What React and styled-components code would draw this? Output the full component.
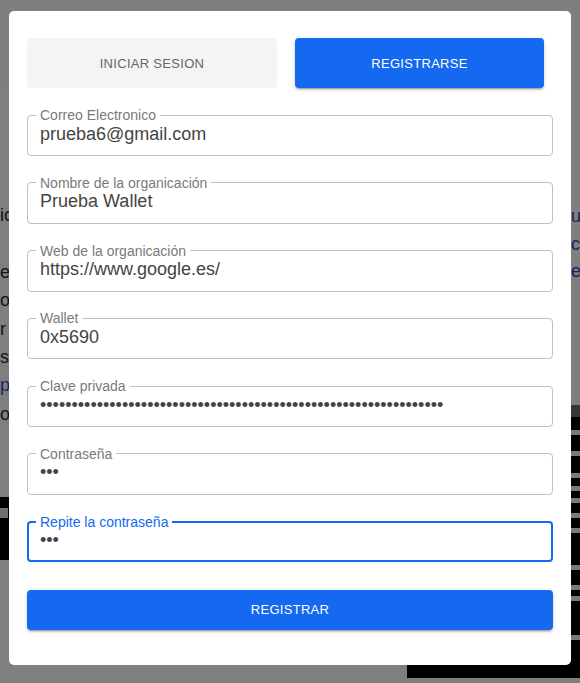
import React from 'react';
import styled, { createGlobalStyle } from 'styled-components';

const GlobalStyle = createGlobalStyle`
    html, body {
        margin: 0;
        padding: 0;
        height: 100%;
        overflow: hidden;
        font-family: "Liberation Sans", Arial, sans-serif;
        background: #ffffff;
    }
    * {
        box-sizing: border-box;
    }
`;

const BLUE = '#1469f0';

const fields = [
    { label: 'Correo Electronico', value: 'prueba6@gmail.com', type: 'text' },
    { label: 'Nombre de la organicación', value: 'Prueba Wallet', type: 'text' },
    { label: 'Web de la organicación', value: 'https://www.google.es/', type: 'text' },
    { label: 'Wallet', value: '0x5690', type: 'text' },
    { label: 'Clave privada', value: 'a3f9c1d27b8e4f60a1c5d9e3b7f2a6c0d4e8f1a5b9c3d7e2f6a0b4c8d1e5f9a3', type: 'password' },
    { label: 'Contraseña', value: '123', type: 'password' },
    { label: 'Repite la contraseña', value: '123', type: 'password', focused: true },
];

const leftLines = [
    { text: 'icación de la plataforma', blue: false },
    { text: '  ', blue: false },
    { text: 'e la cadena de bloques', blue: false },
    { text: 'organizaciones registradas', blue: false },
    { text: 'r validar los documentos', blue: false },
    { text: 'su propia wallet', blue: false },
    { text: 'para más información', blue: true },
    { text: 'o: contacto', blue: false },
];

const rightLinks = ['uestro proyecto', 'cumentación', 'er más'];

const darkRows = [37, 58, 80, 93, 105, 120, 135, 172, 192, 203, 242];

const App = () => {
    return (
        <>
            <GlobalStyle />
            <Page>
                <PageHeader />
                <PageMain>
                    <LeftColumn>
                        <Paragraph>
                            {leftLines.map((line, i) => (
                                <Line key={i} $blue={line.blue}>{line.text}</Line>
                            ))}
                        </Paragraph>
                        <ImageBlock>
                            <ImageNotch />
                        </ImageBlock>
                    </LeftColumn>
                    <RightColumn>
                        <Links>
                            {rightLinks.map((l) => (
                                <LinkLine key={l}>{l}</LinkLine>
                            ))}
                        </Links>
                        <DarkPanel>
                            <DarkPanelTop />
                            {darkRows.map((top, i) => (
                                <DarkStripe key={i} style={{ top: top - 12 }} />
                            ))}
                        </DarkPanel>
                    </RightColumn>
                </PageMain>
            </Page>

            <Overlay>
                <Modal>
                    <Tabs>
                        <TabButton>INICIAR SESION</TabButton>
                        <TabButton $active>REGISTRARSE</TabButton>
                    </Tabs>
                    <Form onSubmit={(e) => e.preventDefault()}>
                        {fields.map((f) => (
                            <Field key={f.label} $focused={f.focused}>
                                <Legend $focused={f.focused}>{f.label}</Legend>
                                <Input type={f.type} defaultValue={f.value} readOnly $focused={f.focused} />
                            </Field>
                        ))}
                        <SubmitButton type="submit">REGISTRAR</SubmitButton>
                    </Form>
                </Modal>
            </Overlay>
        </>
    );
};

export default App;

const Page = styled.div`
    width: 100%;
    height: 100vh;
    display: flex;
    flex-direction: column;
    background: #ffffff;
`;

const PageHeader = styled.div`
    height: 88px;
    flex-shrink: 0;
    background: #fdfdfd;
`;

const PageMain = styled.div`
    display: grid;
    grid-template-columns: 407px 1fr;
    align-items: start;
`;

const LeftColumn = styled.div`
    display: flex;
    flex-direction: column;
`;

const Paragraph = styled.div`
    margin-top: 113px;
    display: flex;
    flex-direction: column;
`;

const Line = styled.div`
    font-size: 18px;
    line-height: 28.4px;
    height: 28.4px;
    white-space: pre;
    color: ${(p) => (p.$blue ? '#1d4fb8' : '#2a2a2a')};
`;

const ImageBlock = styled.div`
    margin-top: 69px;
    height: 63px;
    width: 300px;
    background: #000;
    position: relative;
`;

const ImageNotch = styled.div`
    position: absolute;
    left: 0;
    top: 11px;
    width: 8px;
    height: 10px;
    background: #e0e0e0;
`;

const RightColumn = styled.div`
    display: flex;
    flex-direction: column;
    overflow: hidden;
`;

const Links = styled.div`
    margin-top: 115px;
    padding-left: 164px;
    display: flex;
    flex-direction: column;
`;

const LinkLine = styled.div`
    font-size: 18px;
    line-height: 27.5px;
    white-space: nowrap;
    color: #1d4fb8;
`;

const DarkPanel = styled.div`
    margin-top: 119px;
    height: 273px;
    background: #000;
    position: relative;
`;

const DarkPanelTop = styled.div`
    height: 12px;
    background: #6e6e6e;
`;

const DarkStripe = styled.div`
    position: absolute;
    left: 0;
    right: 0;
    height: 5px;
    background: #f4f4f4;
`;

const Overlay = styled.div`
    position: fixed;
    inset: 0;
    background: rgba(0, 0, 0, 0.5);
    display: flex;
    justify-content: center;
    align-items: flex-start;
    padding-top: 11px;
`;

const Modal = styled.div`
    width: 562px;
    height: 654px;
    background: #ffffff;
    border-radius: 5px;
    padding: 27px 18px 36px;
    display: flex;
    flex-direction: column;
`;

const Tabs = styled.div`
    display: grid;
    grid-template-columns: 250px 249px;
    column-gap: 18px;
`;

const TabButton = styled.button`
    height: 50px;
    border: none;
    border-radius: 4px;
    font-family: "Liberation Sans", Arial, sans-serif;
    font-size: 13px;
    letter-spacing: 0.3px;
    cursor: pointer;
    background: ${(p) => (p.$active ? BLUE : '#f4f4f4')};
    color: ${(p) => (p.$active ? '#ffffff' : '#666666')};
    box-shadow: ${(p) =>
        p.$active
            ? '0 3px 1px -2px rgba(0,0,0,0.2), 0 2px 2px 0 rgba(0,0,0,0.14), 0 1px 5px 0 rgba(0,0,0,0.12)'
            : 'none'};
`;

const Form = styled.form`
    margin-top: 19px;
    display: flex;
    flex-direction: column;
    gap: 18.8px;
`;

const Field = styled.fieldset`
    margin: 0;
    padding: 0 12px;
    border: ${(p) => (p.$focused ? `2px solid ${BLUE}` : '1px solid #c0c0c0')};
    padding-left: ${(p) => (p.$focused ? '11px' : '12px')};
    border-radius: 4px;
    min-width: 0;
`;

const Legend = styled.legend`
    padding: 0 4px;
    margin-left: -4px;
    font-size: 14px;
    line-height: 16px;
    color: ${(p) => (p.$focused ? BLUE : '#7a7a7a')};
`;

const Input = styled.input`
    display: block;
    width: 100%;
    border: none;
    outline: none;
    padding: 0 0 ${(p) => (p.$focused ? '8px' : '10px')};
    margin: 0;
    height: ${(p) => (p.$focused ? '30px' : '32px')};
    font-family: "Liberation Sans", Arial, sans-serif;
    font-size: 18px;
    line-height: 22px;
    color: #444444;
    background: transparent;
`;

const SubmitButton = styled.button`
    margin-top: 9px;
    height: 40px;
    border: none;
    border-radius: 4px;
    background: ${BLUE};
    color: #ffffff;
    font-family: "Liberation Sans", Arial, sans-serif;
    font-size: 13px;
    letter-spacing: 0.3px;
    cursor: pointer;
    box-shadow: 0 3px 1px -2px rgba(0,0,0,0.2), 0 2px 2px 0 rgba(0,0,0,0.14), 0 1px 5px 0 rgba(0,0,0,0.12);
`;
